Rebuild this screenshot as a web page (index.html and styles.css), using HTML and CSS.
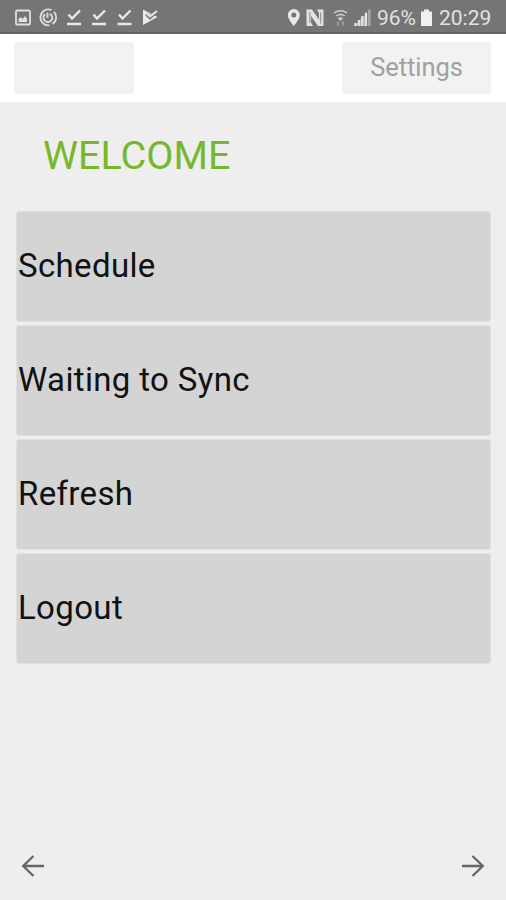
FILE: index.html
```html
<!DOCTYPE html>
<html lang="en">
<head>
<meta charset="utf-8">
<title>Welcome</title>
<link rel="stylesheet" href="styles.css">
</head>
<body>
<div class="status">
  <svg class="icons-left" width="144" height="20" viewBox="14 8 144 20" aria-hidden="true">
    <rect x="16" y="10.500" width="14" height="14" rx="1" fill="none" stroke="#dedede" stroke-width="1.800"/>
    <path d="M18.500 22v-3l2-2 2 2 2.500-3 2 3v3z" fill="#dedede"/>
    <path d="M49.500 25.300A8 8 0 1 1 51.500 10M54 11.900A8 8 0 0 1 52.500 24" fill="none" stroke="#dedede" stroke-width="1.800"/>
    <path d="M45 14.300A4.400 4.400 0 1 0 50 13.800M47.500 12.800v5" fill="none" stroke="#dedede" stroke-width="1.900"/>
    <g fill="none" stroke="#e8e8e8" stroke-width="2.400">
      <path d="M68.500 14.500l3.500 4 8-8M67 24h14"/>
      <path d="M93.500 14.500l3.500 4 8-8M92 24h14"/>
      <path d="M119 14.500l3.500 4 8-8M117.500 24h14"/>
    </g>
    <path d="M143 9.500l14.500 7.500-14.500 8z" fill="#e8e8e8"/>
    <path d="M146.500 14l3.500 3.500 7-7" fill="none" stroke="#777" stroke-width="3.600"/>
    <path d="M147 13.500l3 3 7-5.500" fill="none" stroke="#e8e8e8" stroke-width="2"/>
  </svg>
  <div class="status-right">
    <svg width="86" height="20" viewBox="286 8 86 20" aria-hidden="true">
      <path fill="#e8e8e8" fill-rule="evenodd" d="M293.800 9a6 6 0 0 0-6 6c0 4.200 6 11 6 11s6-6.800 6-11a6 6 0 0 0-6-6zm0 3.500a2.500 2.500 0 1 1 0 5 2.500 2.500 0 0 1 0-5z"/>
      <path d="M306.500 9.500h5.500l7 10V13l-2-3.500h6.500V26H318l-7-10v6.500l2 3.500h-6.500z" fill="#e2e2e2"/>
      <path d="M309.800 12v11M320.700 12.500v11" stroke="#8a8a8a" stroke-width="1"/>
      <g fill="none" stroke="#d0d0d0" stroke-width="1.500">
        <path d="M334 13q6.500-4.600 13 0M336.200 16q4.300-3.200 8.600 0M338.300 18.700q2.200-1.600 4.400 0"/>
      </g>
      <path d="M340.500 21l-1.500-2h3z" fill="#ddd"/>
      <path d="M338 21.500v4M343 21.500v4" stroke="#999" stroke-width="2.200"/>
      <path d="M353.500 26l13-12.500V26z" fill="#a8a8a8"/>
      <path d="M355.500 26v-3M359 26v-6M362.300 26v-10M366 26v-13.500" stroke="#e2e2e2" stroke-width="2.300"/>
      <path d="M369.300 26V9.500" stroke="#a4a4a4" stroke-width="2.600"/>
    </svg>
    <span class="percent">96%</span>
    <svg class="battery" width="13" height="18" viewBox="0 0 13 18" aria-hidden="true">
      <path d="M4 .5h5v2h3V17H1V2.500h3z" fill="#f0f0f0"/>
    </svg>
    <span class="clock">20:29</span>
  </div>
</div>
<header class="toolbar">
  <div class="tool blank"></div>
  <div class="tool settings"><span class="label">Settings</span></div>
</header>
<main>
  <h1><span class="label">WELCOME</span></h1>
  <nav class="menu">
    <div class="item"><span class="label">Schedule</span></div>
    <div class="item"><span class="label">Waiting to Sync</span></div>
    <div class="item"><span class="label">Refresh</span></div>
    <div class="item"><span class="label">Logout</span></div>
  </nav>
</main>
<footer>
  <svg width="24" height="24" viewBox="0 0 24 24" aria-hidden="true"><path d="M23 12H2M12.500 2L2.200 12l10.300 10" fill="none" stroke="#666" stroke-width="2.300"/></svg>
  <svg width="24" height="24" viewBox="0 0 24 24" aria-hidden="true"><path d="M1 12h21M11.500 2l10.300 10-10.300 10" fill="none" stroke="#666" stroke-width="2.300"/></svg>
</footer>
</body>
</html>
```

FILE: styles.css
```css
* { box-sizing: border-box; }
body {
  margin: 0;
  height: 900px;
  display: flex;
  flex-direction: column;
  background: #eee;
  font-family: Roboto, sans-serif;
  color: #111;
}
.status {
  height: 34px;
  padding: 0 15px 0 14px;
  display: flex;
  justify-content: space-between;
  align-items: center;
  background: #757575;
  border-bottom: 2px solid #636363;
  color: #e2e2e2;
  font-size: 21px;
  line-height: 32px;
}
.status svg { display: block; margin-top: 4px; }
.status-right { display: flex; align-items: center; }
.percent { width: 40px; margin: 3px 0 0 5px; white-space: nowrap; }
.status .battery { margin: 3px 6px 0 3px; }
.clock { width: 52px; margin-top: 3px; white-space: nowrap; }
.toolbar {
  height: 68px;
  padding: 8px 15px 8px 14px;
  display: flex;
  justify-content: space-between;
  background: #fff;
}
.tool { height: 52px; background: #f2f2f2; border-radius: 2px; }
.blank { width: 120px; }
.settings {
  width: 149px;
  display: flex;
  justify-content: center;
  font-size: 25.500px;
  line-height: 51px;
  letter-spacing: -0.050px;
  color: #a0a0a0;
}
main { flex: 1; padding: 0 15px 0 16px; }
h1 {
  margin: 0;
  height: 109px;
  padding-left: 27px;
  font-size: 39.500px;
  line-height: 108px;
  font-weight: 400;
  color: #76b82a;
}
.menu { display: grid; gap: 3px; }
.item {
  height: 111px;
  padding-left: 1px;
  background: #d4d4d4;
  border: 1px solid #e0e0e0;
  border-radius: 3px;
  font-size: 33px;
  line-height: 108px;
  letter-spacing: 0.350px;
}
footer {
  height: 68px;
  padding: 22px 21px;
  display: flex;
  justify-content: space-between;
}
```
